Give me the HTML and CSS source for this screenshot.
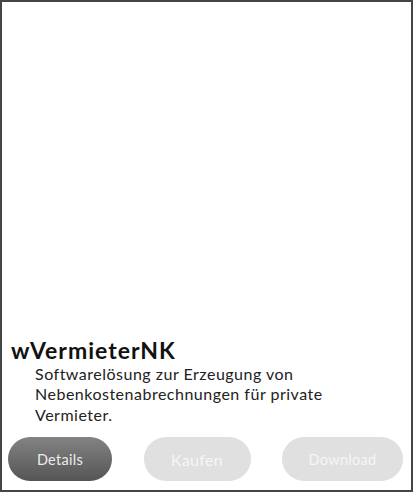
FILE: index.html
```html
<!DOCTYPE html>
<html lang="de">
<head>
<meta charset="utf-8">
<link rel="stylesheet" href="styles.css">
</head>
<body>
<div class="frame">
  <div class="content">
    <h1 class="title">wVermieterNK</h1>
    <p class="desc">Softwarelösung zur Erzeugung von Nebenkostenabrechnungen für private Vermieter.</p>
    <div class="actions">
      <a class="btn btn-primary btn-details">Details</a>
      <a class="btn btn-disabled btn-buy">Kaufen</a>
      <a class="btn btn-disabled btn-download">Download</a>
    </div>
  </div>
</div>
</body>
</html>
```
FILE: styles.css
```css
html, body {
  margin: 0;
  padding: 0;
  background: #fff;
}
.frame {
  box-sizing: border-box;
  width: 413px;
  height: 492px;
  border: 2px solid #454545;
  display: flex;
  flex-direction: column;
  justify-content: flex-end;
  font-family: "Lato", "Open Sans", sans-serif;
}
.content {
  padding: 0 8px 9px 6px;
}
.title {
  margin: 0 0 0 3px;
  font-size: 23px;
  font-weight: 700;
  line-height: 28px;
  color: #111;
  letter-spacing: 1px;
}
.desc {
  margin: 0 0 0 27px;
  width: 320px;
  font-size: 16px;
  line-height: 20.5px;
  color: #222;
  letter-spacing: 0.5px;
}
.actions {
  display: flex;
  justify-content: space-between;
  margin-top: 12px;
}
.btn {
  box-sizing: border-box;
  height: 44px;
  border-radius: 22px;
  display: flex;
  align-items: center;
  justify-content: center;
  font-size: 14.5px;
  color: #fff;
  text-decoration: none;
  letter-spacing: 0.3px;
}
.btn-primary {
  background: linear-gradient(to bottom, #838383, #555555);
  color: #ececec;
}
.btn-disabled {
  background: #e0e0e0;
  color: #f6f6f6;
}
.btn-details { width: 104px; }
.btn-buy { width: 107px; font-size: 16px; }
.btn-download { width: 121px; }
```
